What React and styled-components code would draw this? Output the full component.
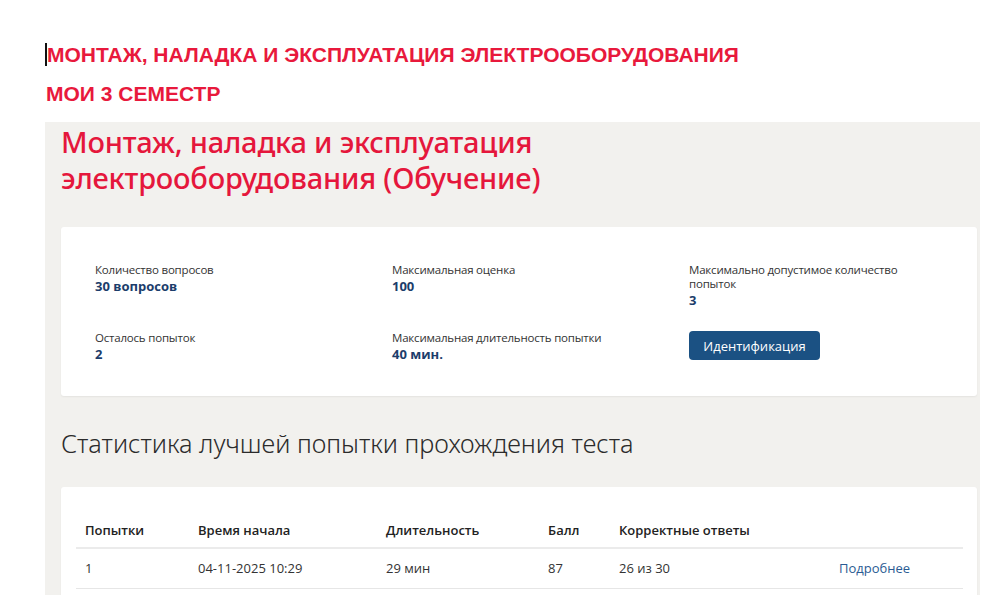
import React from 'react';
import styled, { createGlobalStyle } from 'styled-components';

const GlobalStyle = createGlobalStyle`
  html, body {
    margin: 0;
    padding: 0;
    background: #ffffff;
  }
  body {
    font-family: "Open Sans", "Noto Sans", sans-serif;
    color: #333333;
  }
  * {
    box-sizing: border-box;
  }
`;

const Page = styled.div`
  width: 1005px;
  height: 595px;
  overflow: hidden;
  background: #fff;
`;

const TopHeaders = styled.div`
  padding: 43px 0 0 45px;
`;

const CapsTitle = styled.h1`
  margin: 0 0 ${props => props.gap || 0}px;
  font-family: "Liberation Sans", Arial, sans-serif;
  font-weight: 700;
  font-size: 21px;
  line-height: 22px;
  color: #e8193c;
  display: flex;
  align-items: center;
  padding-left: ${props => (props.withCaret ? 0 : 1)}px;
`;

const Caret = styled.span`
  display: inline-block;
  width: 2px;
  height: 23px;
  background: #111;
`;

const Panel = styled.section`
  margin: 17px 0 0 45px;
  width: 935px;
  background: #f2f1ee;
  padding: 2px 3px 30px 16px;
`;

const CourseTitle = styled.h2`
  margin: 0 0 31px;
  font-family: "Noto Sans", "Open Sans", sans-serif;
  font-weight: 500;
  font-size: 29px;
  line-height: 36px;
  color: #e5173c;
  letter-spacing: -0.2px;
`;

const Card = styled.div`
  background: #fff;
  border-radius: 3px;
  box-shadow: 0 1px 2px rgba(0, 0, 0, 0.06);
  padding: ${props => props.pad};
`;

const InfoGrid = styled.div`
  display: grid;
  grid-template-columns: 297px 297px 1fr;
  row-gap: 22px;
`;

const InfoItem = styled.div`
  max-width: 215px;
`;

const Label = styled.div`
  font-size: 11.5px;
  letter-spacing: -0.2px;
  line-height: 14px;
  color: #333;
`;

const Value = styled.div`
  font-size: 13px;
  line-height: 18px;
  font-weight: 700;
  color: #1c3d6b;
`;

const Button = styled.button`
  width: 131px;
  height: 29px;
  border: none;
  border-radius: 4px;
  background: #1b5183;
  color: #fff;
  font-family: "Open Sans", "Noto Sans", sans-serif;
  font-size: 13px;
  padding: 0;
  cursor: pointer;
`;

const SectionTitle = styled.h3`
  margin: 30px 0 27px;
  font-family: "Noto Sans", "Open Sans", sans-serif;
  font-weight: 300;
  font-size: 25.3px;
  line-height: 34px;
  color: #2b2b2b;
`;

const Table = styled.table`
  width: 100%;
  border-collapse: collapse;
  table-layout: fixed;
  font-size: 13px;
`;

const Th = styled.th`
  text-align: left;
  font-weight: 600;
  color: #222;
  padding: 8px 9px;
  line-height: 18px;
  border-bottom: 2px solid #ebebeb;
`;

const Td = styled.td`
  padding: 10px 9px;
  line-height: 19px;
  color: #333;
  border-bottom: 1px solid #e6e6e6;
`;

const Link = styled.a`
  color: #2a5b93;
  text-decoration: none;
`;

const info = [
  { label: 'Количество вопросов', value: '30 вопросов' },
  { label: 'Максимальная оценка', value: '100' },
  { label: 'Максимально допустимое количество попыток', value: '3' },
  { label: 'Осталось попыток', value: '2' },
  { label: 'Максимальная длительность попытки', value: '40 мин.' },
];

const columns = [
  { title: 'Попытки', width: 113 },
  { title: 'Время начала', width: 188 },
  { title: 'Длительность', width: 162 },
  { title: 'Балл', width: 71 },
  { title: 'Корректные ответы', width: 220 },
  { title: '', width: 133 },
];

const App = () => (
  <>
    <GlobalStyle />
    <Page>
      <TopHeaders>
        <CapsTitle gap={17} withCaret>
          <Caret />
          МОНТАЖ, НАЛАДКА И ЭКСПЛУАТАЦИЯ ЭЛЕКТРООБОРУДОВАНИЯ
        </CapsTitle>
        <CapsTitle>МОИ 3 СЕМЕСТР</CapsTitle>
      </TopHeaders>
      <Panel>
        <CourseTitle>
          Монтаж, наладка и эксплуатация
          <br />
          электрооборудования (Обучение)
        </CourseTitle>
        <Card pad="36px 34px 33px">
          <InfoGrid>
            {info.map(item => (
              <InfoItem key={item.label}>
                <Label>{item.label}</Label>
                <Value>{item.value}</Value>
              </InfoItem>
            ))}
            <InfoItem>
              <Button>Идентификация</Button>
            </InfoItem>
          </InfoGrid>
        </Card>
        <SectionTitle>Статистика лучшей попытки прохождения теста</SectionTitle>
        <Card pad="26px 14px 20px 15px">
          <Table>
            <colgroup>
              {columns.map((c, i) => (
                <col key={i} style={{ width: c.width }} />
              ))}
            </colgroup>
            <thead>
              <tr>
                {columns.map((c, i) => (
                  <Th key={i}>{c.title}</Th>
                ))}
              </tr>
            </thead>
            <tbody>
              <tr>
                <Td>1</Td>
                <Td>04-11-2025 10:29</Td>
                <Td>29 мин</Td>
                <Td>87</Td>
                <Td>26 из 30</Td>
                <Td>
                  <Link href="#">Подробнее</Link>
                </Td>
              </tr>
            </tbody>
          </Table>
        </Card>
      </Panel>
    </Page>
  </>
);

export default App;
